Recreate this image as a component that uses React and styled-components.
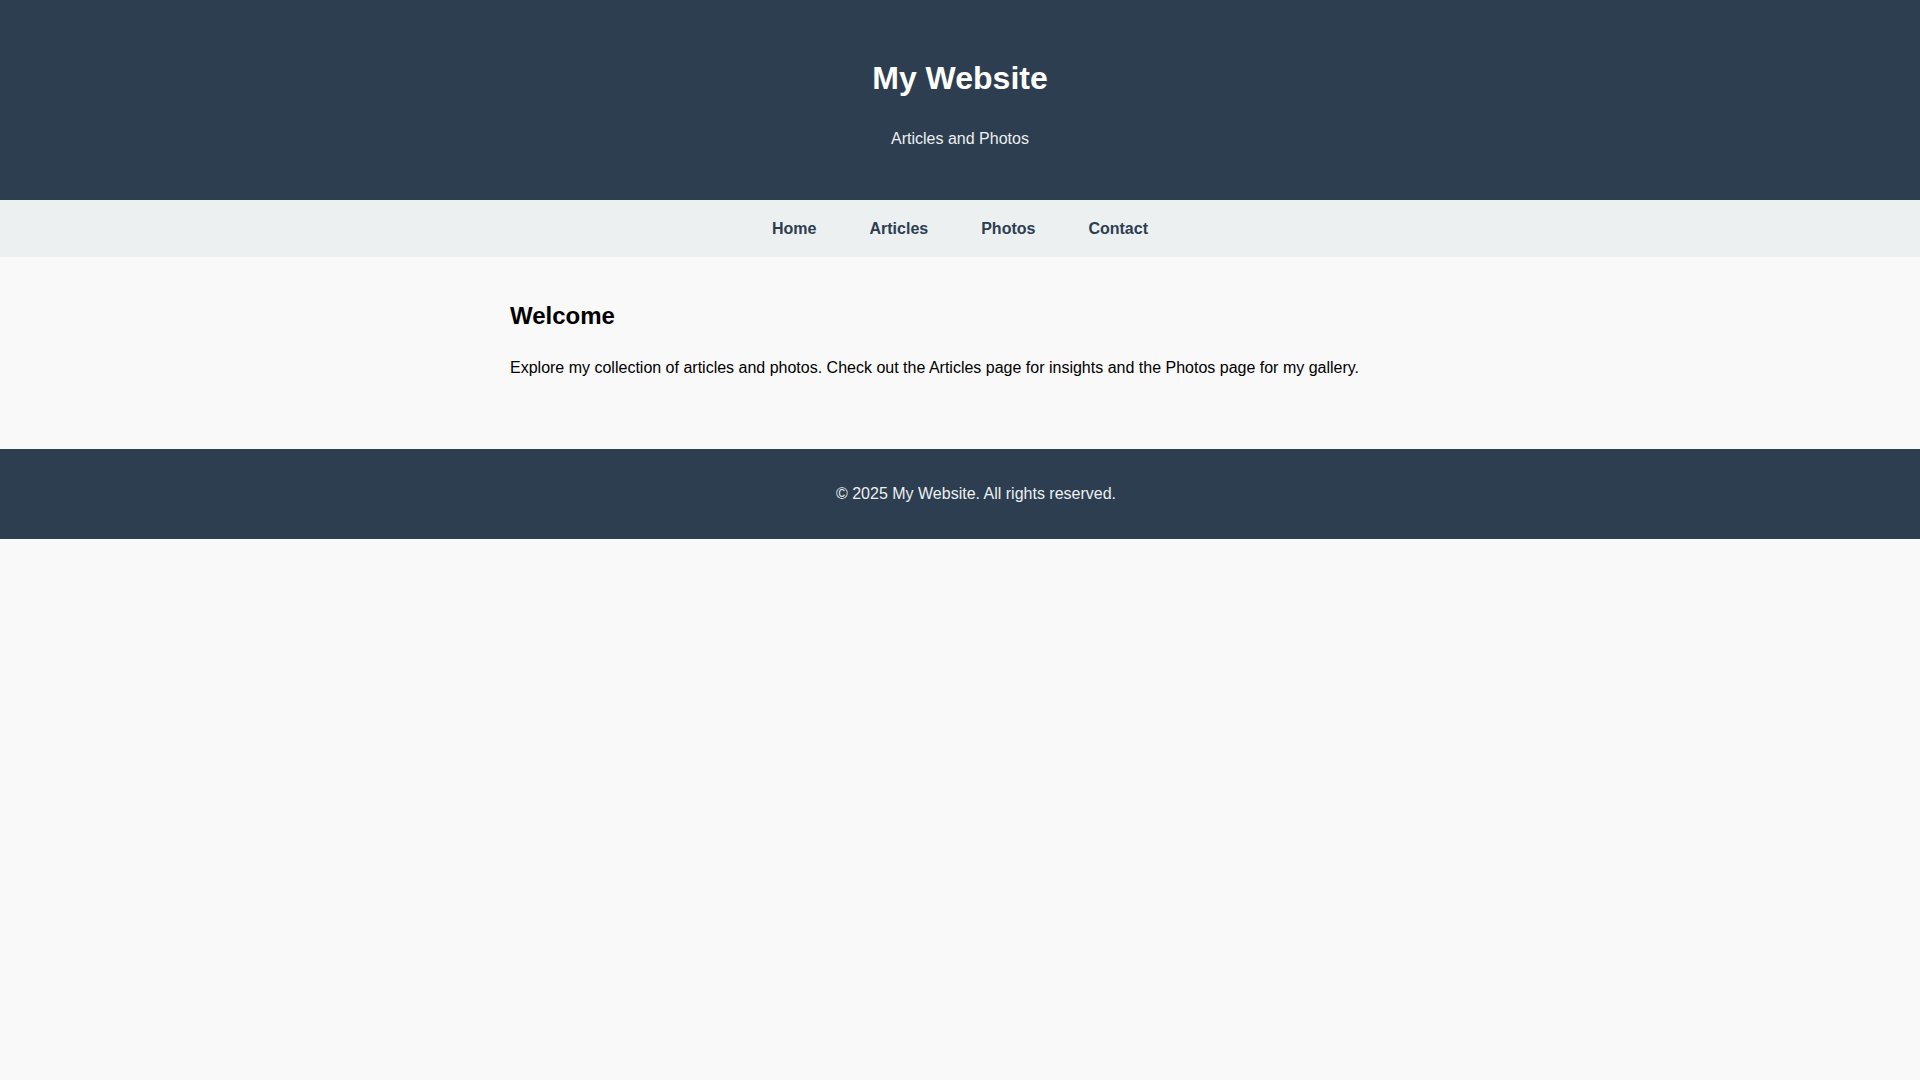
import React from "react";
import styled, { createGlobalStyle } from "styled-components";

const GlobalStyle = createGlobalStyle`
  body {
    margin: 0;
    font-family: "Liberation Sans", Arial, sans-serif;
    line-height: 1.6;
    background: #f9f9f9;
    color: #000;
  }
`;

const Header = styled.header`
  background: #2c3e50;
  color: #fff;
  text-align: center;
  padding: 2rem;
`;

const Title = styled.h1`
  font-size: 2em;
  margin: 0.67em 0;
`;

const Tagline = styled.p`
  margin: 1em 0;
  color: #ecf0f1;
`;

const Nav = styled.nav`
  background: #ecf0f1;
  padding: 1rem;
  display: flex;
  justify-content: center;
  gap: 53px;
`;

const NavLink = styled.a`
  color: #2c3e50;
  font-weight: bold;
  text-decoration: none;
  cursor: pointer;
`;

const Main = styled.main`
  max-width: 900px;
  margin: 0 auto;
  padding: 20px 0;
`;

const Section = styled.section`
  margin-bottom: 48px;

  h2 {
    font-size: 1.5em;
    margin: 0.83em 0;
  }

  p {
    margin: 1em 0;
  }
`;

const Footer = styled.footer`
  background: #2c3e50;
  color: #ecf0f1;
  text-align: center;
  padding: 1rem;
  width: 100%;

  p {
    margin: 1em 0;
  }
`;

const links = ["Home", "Articles", "Photos", "Contact"];

export default function App() {
  return (
    <>
      <GlobalStyle />
      <Header>
        <Title>My Website</Title>
        <Tagline>Articles and Photos</Tagline>
      </Header>
      <Nav>
        {links.map((l) => (
          <NavLink key={l}>{l}</NavLink>
        ))}
      </Nav>
      <Main>
        <Section>
          <h2>Welcome</h2>
          <p>
            Explore my collection of articles and photos. Check out the Articles
            page for insights and the Photos page for my gallery.
          </p>
        </Section>
      </Main>
      <Footer>
        <p>© 2025 My Website. All rights reserved.</p>
      </Footer>
    </>
  );
}
